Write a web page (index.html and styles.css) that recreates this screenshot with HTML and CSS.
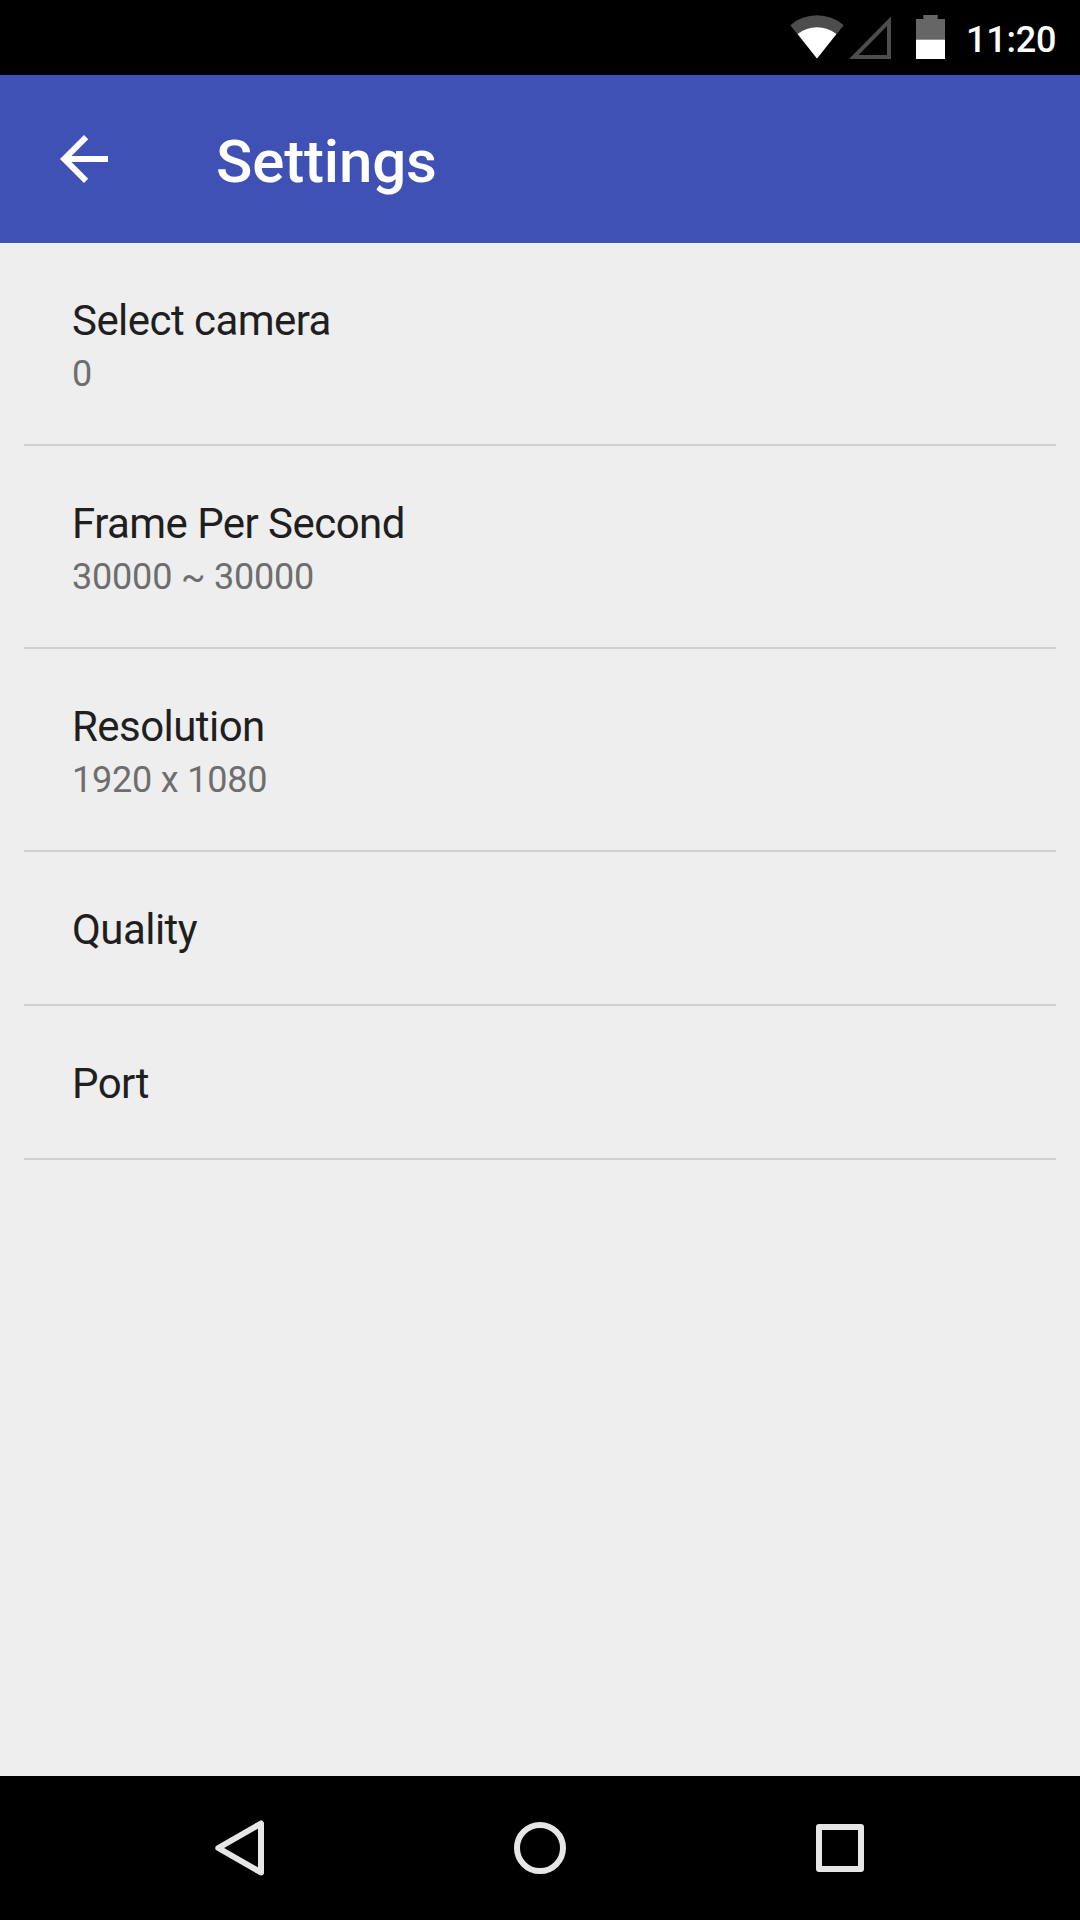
FILE: index.html
```
<!DOCTYPE html>
<html lang="en">
<head>
  <meta charset="UTF-8" />
  <title>Settings</title>
  <link rel="stylesheet" href="styles.css">
</head>
<body>

  <div class="status-bar">
    <svg class="wifi" width="54" height="44" viewBox="0 0 54 44">
      <path fill="#4d4d4d" d="M27 43.5L0.3 10.2A41 41 0 0 1 53.7 10.2z" />
      <path fill="#fff" d="M27 43.5L7.6 19.1A31 31 0 0 1 46.4 19.1z" />
    </svg>
    <svg class="signal" width="42" height="44" viewBox="0 0 42 44">
      <path fill="#4d4d4d" fill-rule="evenodd" d="M0 44H42V1.5zM9.6 40H38V11z" />
    </svg>
    <svg class="battery" width="29" height="44" viewBox="0 0 29 44">
      <path fill="#666" d="M7.3 0H21.7V4H29V25H0V4H7.3z" />
      <path fill="#fff" d="M0 24.7H29V44H0z" />
    </svg>
    <span class="clock">11:20</span>
  </div>

  <header class="app-bar">
    <svg width="72" height="72" viewBox="0 0 24 24">
      <path fill="#fff" d="M20 11H7.83l5.59-5.59L12 4l-8 8 8 8 1.41-1.41L7.83 13H20v-2z" />
    </svg>
    <h1>Settings</h1>
  </header>

  <main class="settings">
    <div class="item">
      <div class="title">Select camera</div>
      <div class="summary">0</div>
    </div>
    <div class="item">
      <div class="title">Frame Per Second</div>
      <div class="summary">30000 ~ 30000</div>
    </div>
    <div class="item">
      <div class="title">Resolution</div>
      <div class="summary">1920 x 1080</div>
    </div>
    <div class="item">
      <div class="title">Quality</div>
    </div>
    <div class="item">
      <div class="title">Port</div>
    </div>
  </main>

  <nav class="nav-bar">
    <svg width="72" height="72" viewBox="0 0 72 72">
      <path d="M57 11.5V60.5L14.3 36z" />
    </svg>
    <svg width="72" height="72" viewBox="0 0 72 72">
      <circle cx="36" cy="36" r="23" />
    </svg>
    <svg width="72" height="72" viewBox="0 0 72 72">
      <path d="M15 15H57V57H15z" />
    </svg>
  </nav>

</body>
</html>
```
FILE: styles.css
```
* {
  box-sizing: border-box;
  margin: 0;
  padding: 0;
}
body {
  font-family: Roboto, sans-serif;
  background: #eee;
  height: 100vh;
  display: flex;
  flex-direction: column;
  overflow: hidden;
}
svg {
  display: block;
  flex: none;
}

/* Status bar */
.status-bar {
  height: 75px;
  padding: 15px 24px 0 0;
  background: #000;
  display: flex;
  justify-content: flex-end;
  align-items: flex-start;
}
.signal {
  margin-left: 5px;
}
.battery {
  margin-left: 25px;
}
.clock {
  width: 90px;
  margin-left: 21px;
  padding-top: 4px;
  color: #fff;
  font-size: 36px;
  font-weight: 500;
  line-height: 42px;
  letter-spacing: -0.2px;
  text-align: right;
}

/* App bar */
.app-bar {
  height: 168px;
  padding-left: 48px;
  background: #3f51b5;
  color: #fff;
  display: flex;
  align-items: center;
}
.app-bar h1 {
  margin-left: 96px;
  padding-top: 6px;
  font-size: 60px;
  font-weight: 500;
  line-height: 70px;
  letter-spacing: -0.15px;
}

/* Settings list */
.settings {
  flex: 1;
  padding: 0 24px;
}
.item {
  padding: 53px 48px 50px;
  border-bottom: 2px solid #d0d0d0;
}
.title {
  color: #1f1f1f;
  font-size: 42px;
  line-height: 49px;
  letter-spacing: -0.55px;
}
.summary {
  margin: 8px 0 -1px;
  color: #6e6e6e;
  font-size: 36px;
  line-height: 42px;
  letter-spacing: -0.2px;
}

/* Navigation bar */
.nav-bar {
  height: 144px;
  padding: 0 90px;
  background: #000;
  display: flex;
  justify-content: space-around;
  align-items: center;
}
.nav-bar svg {
  fill: none;
  stroke: #e6e6e6;
  stroke-width: 6;
  stroke-linejoin: round;
}
```
